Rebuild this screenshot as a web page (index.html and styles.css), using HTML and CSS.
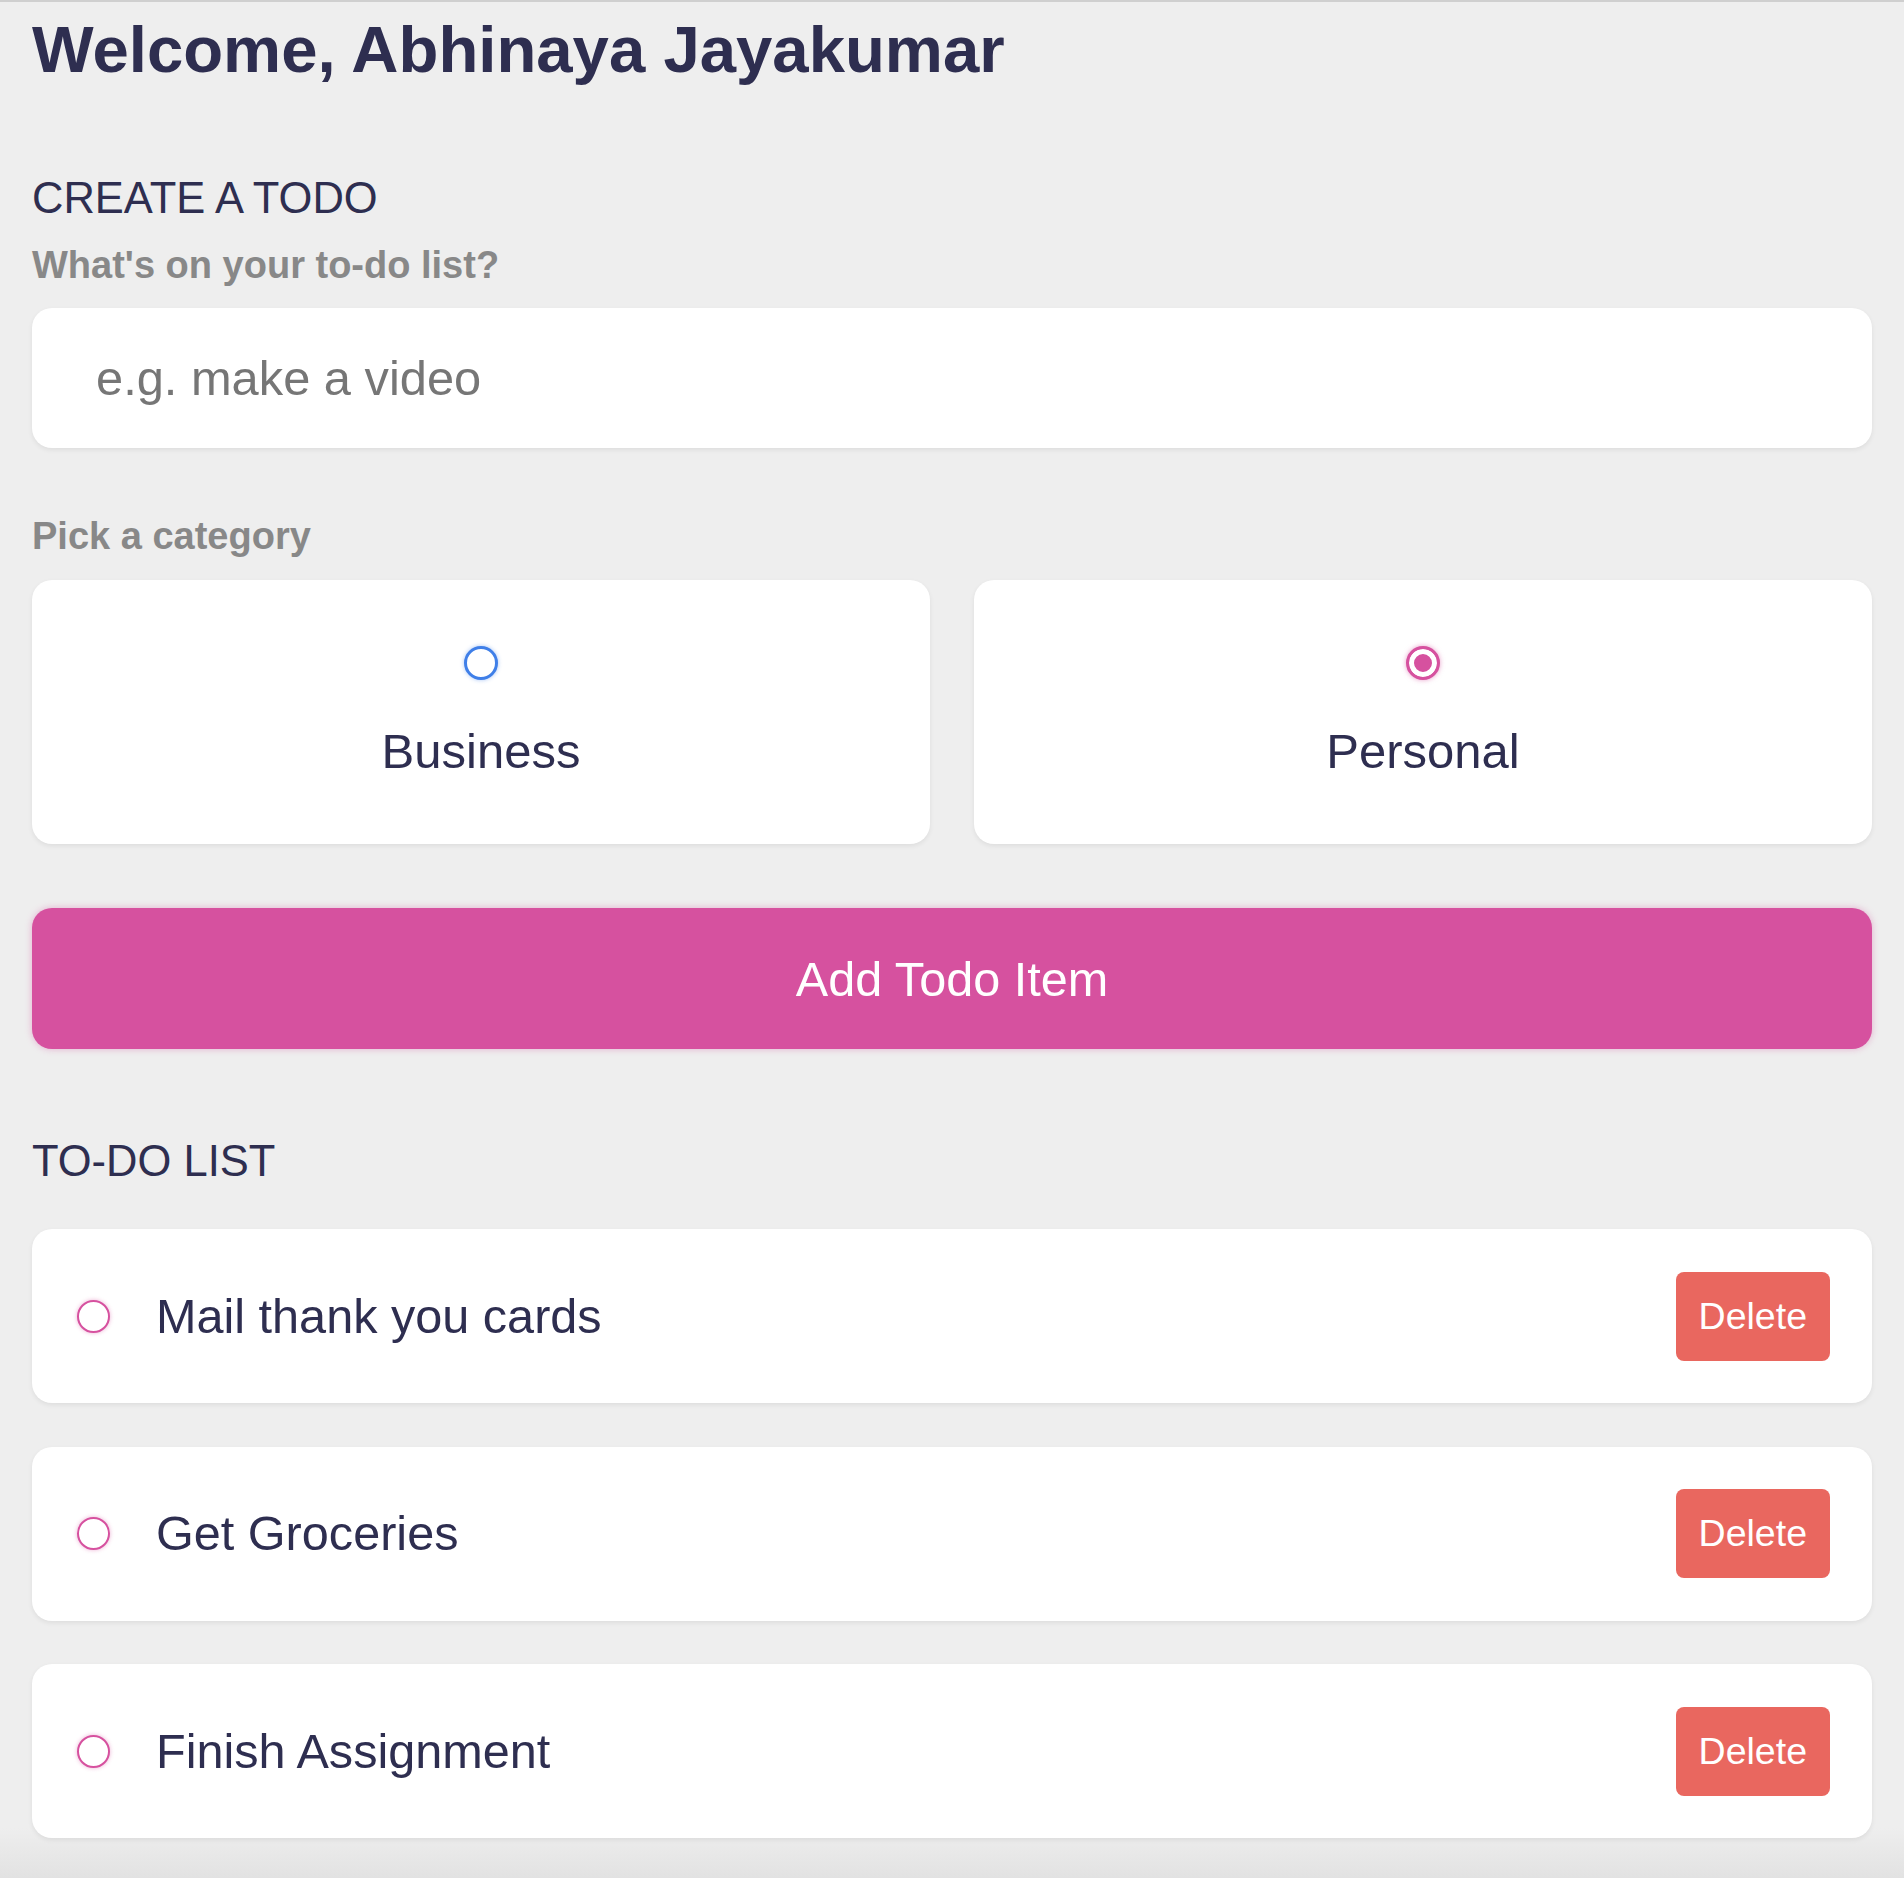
FILE: index.html
```html
<!DOCTYPE html>
<html lang="en">
<head>
<meta charset="utf-8">
<title>Todo</title>
<link rel="stylesheet" href="styles.css">
</head>
<body>
<main class="page">
  <h1 class="greeting">Welcome, Abhinaya Jayakumar</h1>

  <section class="create">
    <h2 class="section-title">CREATE A TODO</h2>
    <label class="field-label" for="todo">What's on your to-do list?</label>
    <input class="todo-input" id="todo" type="text" placeholder="e.g. make a video">

    <p class="field-label pick-label">Pick a category</p>
    <div class="categories">
      <label class="category">
        <input class="radio radio-business" type="radio" name="category" value="business">
        <span class="category-name">Business</span>
      </label>
      <label class="category">
        <input class="radio radio-personal" type="radio" name="category" value="personal" checked>
        <span class="category-name">Personal</span>
      </label>
    </div>

    <button class="add-btn" type="button">Add Todo Item</button>
  </section>

  <section class="list">
    <h2 class="section-title list-title">TO-DO LIST</h2>
    <div class="todo-items">
      <div class="todo-item">
        <input class="check" type="checkbox">
        <span class="todo-text">Mail thank you cards</span>
        <button class="delete-btn" type="button">Delete</button>
      </div>
      <div class="todo-item">
        <input class="check" type="checkbox">
        <span class="todo-text">Get Groceries</span>
        <button class="delete-btn" type="button">Delete</button>
      </div>
      <div class="todo-item">
        <input class="check" type="checkbox">
        <span class="todo-text">Finish Assignment</span>
        <button class="delete-btn" type="button">Delete</button>
      </div>
    </div>
  </section>
</main>
</body>
</html>
```

FILE: styles.css
```css
* {
  box-sizing: border-box;
}

html {
  background: #eeeeee;
}

body {
  margin: 0;
  min-height: 100vh;
  border-top: 2px solid #cfcfcf;
  background: linear-gradient(to bottom, #eeeeee calc(100% - 50px), #e2e2e2 100%);
  font-family: "Liberation Sans", Arial, Helvetica, sans-serif;
  color: #2e2e50;
}

.page {
  padding: 0 32px 40px;
}

.greeting {
  margin: 11px 0 0;
  font-size: 65.3px;
  line-height: 74px;
  font-weight: 700;
  color: #2e2e50;
}

.section-title {
  margin: 87px 0 0;
  font-size: 43.5px;
  line-height: 48px;
  font-weight: 400;
  color: #2e2e50;
}

.field-label {
  display: block;
  margin: 22px 0 0;
  font-size: 38px;
  line-height: 43px;
  font-weight: 700;
  color: #888888;
}

.todo-input {
  display: block;
  width: 100%;
  height: 140px;
  margin-top: 21px;
  padding: 0 64px;
  border: none;
  border-radius: 20px;
  background: #ffffff;
  box-shadow: 0 2px 5px rgba(0, 0, 0, 0.07);
  font-family: inherit;
  font-size: 48.8px;
  color: #2e2e50;
  outline: none;
}

.todo-input::placeholder {
  color: #767676;
}

.pick-label {
  margin-top: 67px;
}

.categories {
  display: grid;
  grid-template-columns: 1fr 1fr;
  gap: 44px;
  margin-top: 22px;
}

.category {
  display: flex;
  flex-direction: column;
  align-items: center;
  height: 264px;
  padding-top: 66px;
  border-radius: 20px;
  background: #ffffff;
  box-shadow: 0 2px 5px rgba(0, 0, 0, 0.07);
  cursor: pointer;
}

.radio {
  appearance: none;
  -webkit-appearance: none;
  width: 34px;
  height: 34px;
  margin: 0;
  border-radius: 50%;
  background: #ffffff;
}

.radio-business {
  border: 3px solid #3f7fe8;
  box-shadow: 0 0 4px rgba(63, 127, 232, 0.45);
}

.radio-personal {
  border: 3px solid #d6519f;
  background: #d6519f;
  box-shadow: inset 0 0 0 5px #ffffff, 0 0 5px rgba(214, 81, 159, 0.55);
}

.category-name {
  margin-top: 44px;
  font-size: 49px;
  line-height: 55px;
  color: #2e2e50;
}

.add-btn {
  display: block;
  width: 100%;
  height: 141px;
  margin-top: 64px;
  border: none;
  border-radius: 20px;
  background: #d6519f;
  box-shadow: 0 0 7px rgba(214, 81, 159, 0.4);
  font-family: inherit;
  font-size: 48.6px;
  color: #ffffff;
  cursor: pointer;
}

.list-title {
  margin-top: 88px;
}

.todo-items {
  display: flex;
  flex-direction: column;
  gap: 43.5px;
  margin-top: 44px;
}

.todo-item {
  display: flex;
  align-items: center;
  height: 174px;
  padding: 0 42px 0 45px;
  border-radius: 20px;
  background: #ffffff;
  box-shadow: 0 2px 5px rgba(0, 0, 0, 0.07);
}

.check {
  appearance: none;
  -webkit-appearance: none;
  flex: none;
  width: 33px;
  height: 33px;
  margin: 0;
  border: 2.5px solid #d6519f;
  border-radius: 50%;
  background: #ffffff;
  box-shadow: 0 0 4px rgba(214, 81, 159, 0.45);
}

.todo-text {
  flex: 1;
  margin-left: 46px;
  font-size: 48.6px;
  line-height: 55px;
  color: #2e2e50;
}

.delete-btn {
  height: 89px;
  padding: 0 23px;
  border: none;
  border-radius: 8px;
  background: #e9675f;
  font-family: inherit;
  font-size: 37.5px;
  color: #ffffff;
  cursor: pointer;
}
```
